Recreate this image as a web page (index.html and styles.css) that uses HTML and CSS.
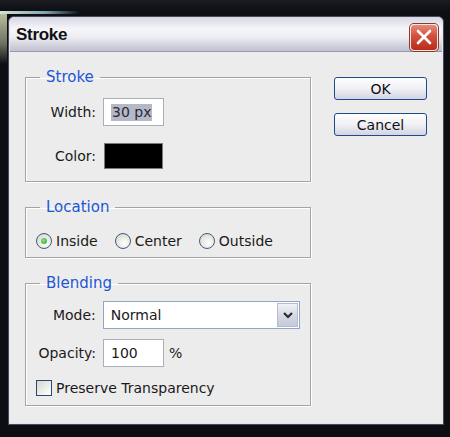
FILE: index.html
```html
<!DOCTYPE html>
<html lang="en">
<head>
  <title>Stroke</title>
  <meta charset="utf-8">
  <link rel="stylesheet" href="styles.css">
</head>
<body>
  <div class="dialog">
    <div class="titlebar">
      <span class="title">Stroke</span>
      <span class="close">
        <svg width="16" height="16" viewBox="0 0 16 16"><path d="M2 2 L14 14 M14 2 L2 14" stroke="#fff" stroke-width="2.6" stroke-linecap="round"/></svg>
      </span>
    </div>

    <div class="client">
      <div class="groups">
        <fieldset class="group stroke">
          <legend>Stroke</legend>
          <div class="row">
            <span class="label">Width:</span>
            <span class="input"><span class="selected">30 px</span></span>
          </div>
          <div class="row color-row">
            <span class="label">Color:</span>
            <span class="swatch"></span>
          </div>
        </fieldset>

        <fieldset class="group location">
          <legend>Location</legend>
          <div class="radios">
            <span class="option"><span class="radio checked"></span>Inside</span>
            <span class="option"><span class="radio"></span>Center</span>
            <span class="option"><span class="radio"></span>Outside</span>
          </div>
        </fieldset>

        <fieldset class="group blending">
          <legend>Blending</legend>
          <div class="row">
            <span class="label">Mode:</span>
            <span class="select">
              <span class="value">Normal</span>
              <span class="arrow">
                <svg width="10" height="7" viewBox="0 0 10 7"><path d="M1 1 L5 5 L9 1" fill="none" stroke="#2a2a36" stroke-width="2.2"/></svg>
              </span>
            </span>
          </div>
          <div class="row opacity-row">
            <span class="label">Opacity:</span>
            <span class="input">100</span>
            <span class="unit">%</span>
          </div>
          <div class="check-row">
            <span class="checkbox"></span>Preserve Transparency
          </div>
        </fieldset>
      </div>

      <div class="buttons">
        <span class="button">OK</span>
        <span class="button">Cancel</span>
      </div>
    </div>
  </div>
</body>
</html>
```

FILE: styles.css
```css
* {
  box-sizing: border-box;
}

body {
  margin: 0;
  padding: 16px 6px 12px 8px;
  background-color: #0c0e14;
  background-image:
    linear-gradient(to right, #d8e4d0 0, #7fa6b8 45px, rgba(60, 80, 110, 0) 80px),
    linear-gradient(#b8bc9c, #6c7060 30px, rgba(30, 30, 30, 0) 50px),
    linear-gradient(#1a1c22, #0c0e14 12px);
  background-size: 80px 3px, 7px 50px, 100% 16px;
  background-position: 0 11px, 0 14px, 0 0;
  background-repeat: no-repeat;
  font-family: "DejaVu Sans", sans-serif;
  font-size: 14px;
  color: #1a1a1a;
}

.dialog {
  width: 436px;
  border: 1px solid #4a4a5e;
  border-radius: 6px 6px 0 0;
  background: #e6e6ee;
  padding: 0 1px 1px;
}

.titlebar {
  height: 34px;
  display: flex;
  align-items: center;
  justify-content: space-between;
  padding: 0 4px 0 6px;
  border-radius: 5px 5px 0 0;
  background: linear-gradient(#d6d6e2, #f6f6fa 35%, #ececf2 60%, #c0c0d0);
}

.title {
  font-family: "Liberation Sans", sans-serif;
  font-weight: bold;
  font-size: 17px;
  letter-spacing: -0.3px;
  color: #101014;
  padding-top: 2px;
}

.close {
  width: 28px;
  height: 27px;
  margin-top: 6px;
  display: flex;
  align-items: center;
  justify-content: center;
  border: 1px solid #f4e8e8;
  border-radius: 4px;
  background: linear-gradient(#e88a78, #d0503c 45%, #b82c1c);
  box-shadow: 0 0 0 1px #8a3a30;
}

.client {
  display: flex;
  background: #ececec;
  padding: 16px 15px 17px;
  border-top: 1px solid #9a9aae;
}

.groups {
  width: 286px;
  display: flex;
  flex-direction: column;
  gap: 16px;
}

.group {
  margin: 0;
  min-width: 0;
  border: 1px solid #a4a4a4;
  box-shadow: inset 1px 1px 0 #fff, 1px 1px 0 #fff;
  padding: 0 10px;
}

.group legend {
  margin-left: 4px;
  padding: 0 6px;
  line-height: 18px;
  font-size: 15px;
  color: #1d56d6;
}

.stroke {
  padding-top: 12px;
  padding-bottom: 12px;
}

.location {
  padding-top: 16px;
  padding-bottom: 7px;
}

.blending {
  padding-top: 9px;
  padding-bottom: 8px;
}

.row {
  display: flex;
  align-items: center;
  height: 28px;
}

.label {
  width: 60px;
  margin-right: 7px;
  text-align: right;
}

.input {
  width: 61px;
  height: 28px;
  display: flex;
  align-items: center;
  padding-left: 7px;
  border: 1px solid #a8b0bc;
  background: #ffffff;
}

.selected {
  background: #b4b8c8;
  color: #2a2a30;
  padding: 0 1px;
  line-height: 17px;
}

.color-row {
  margin-top: 17px;
  height: 26px;
}

.swatch {
  width: 59px;
  height: 26px;
  margin-left: 1px;
  border: 1px solid #7a7a7a;
  background: #000000;
}

.radios {
  display: flex;
  align-items: center;
  height: 18px;
}

.option {
  display: flex;
  align-items: center;
  margin-right: 17px;
}

.radio {
  width: 16px;
  height: 16px;
  margin-right: 4px;
  border: 1px solid #3e5c82;
  border-radius: 50%;
  background: radial-gradient(circle at 60% 65%, #ffffff 0, #e4e4dc 60%, #cacac2);
  display: flex;
  align-items: center;
  justify-content: center;
}

.radio.checked::after {
  content: "";
  width: 6px;
  height: 6px;
  border-radius: 50%;
  background: radial-gradient(circle at 40% 40%, #8fe08a, #22a02a);
}

.select {
  width: 198px;
  height: 28px;
  display: flex;
  align-items: center;
  justify-content: space-between;
  padding: 1px 1px 1px 7px;
  border: 1px solid #8ea6c8;
  background: #ffffff;
}

.arrow {
  width: 21px;
  height: 24px;
  display: flex;
  align-items: center;
  justify-content: center;
  border: 1px solid #b6bccc;
  background: linear-gradient(#f0f2f6, #d6dae6 50%, #c4c8d8);
}

.opacity-row {
  margin-top: 10px;
}

.unit {
  margin-left: 5px;
}

.check-row {
  display: flex;
  align-items: center;
  height: 18px;
  margin-top: 12px;
}

.checkbox {
  width: 16px;
  height: 16px;
  margin-right: 4px;
  border: 1px solid #27496e;
  background: linear-gradient(135deg, #d8d8d0, #ffffff);
}

.buttons {
  margin-left: 23px;
  margin-top: 9px;
  display: flex;
  flex-direction: column;
  gap: 13px;
}

.button {
  width: 93px;
  height: 23px;
  display: flex;
  align-items: center;
  justify-content: center;
  border: 1px solid #1f4a8c;
  border-radius: 3px;
  background: linear-gradient(#ffffff, #f0f0f6 50%, #d4d4e2);
  color: #101010;
}
```
